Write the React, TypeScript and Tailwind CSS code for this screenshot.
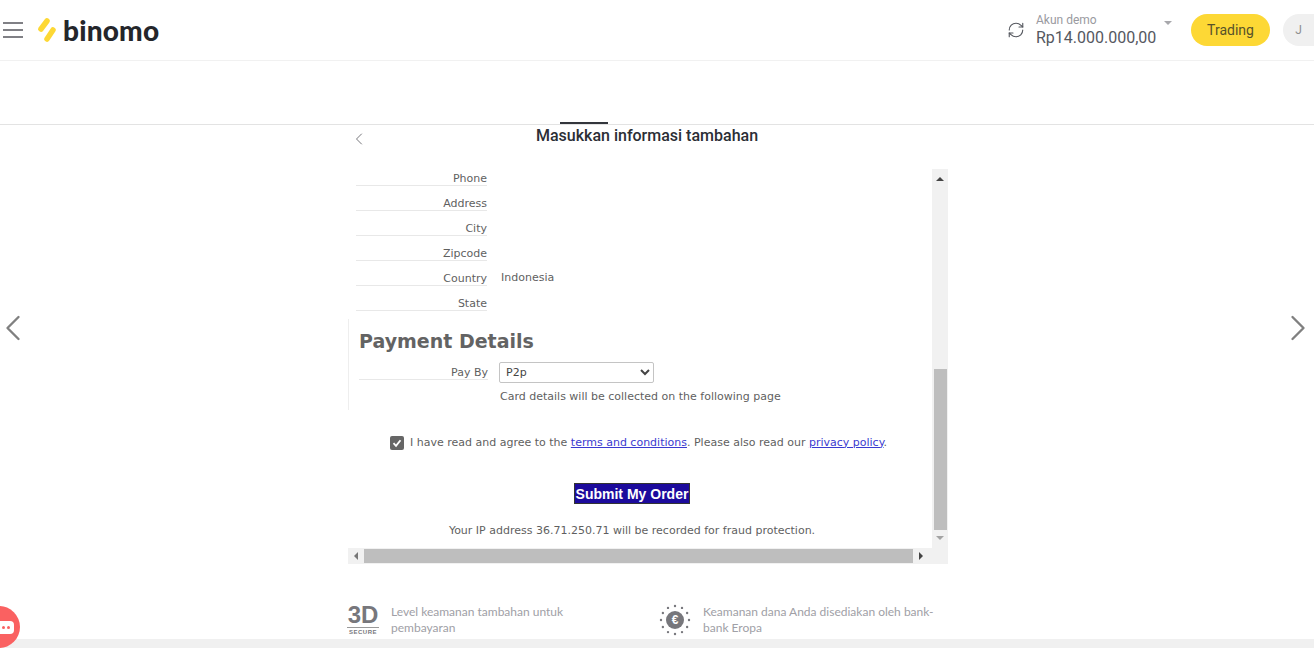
import { ChevronLeft, ChevronRight, RefreshCw } from "lucide-react";

const ROWS = [
  { label: "Phone", first: true },
  { label: "Address" },
  { label: "City" },
  { label: "Zipcode" },
  { label: "Country", value: "Indonesia" },
  { label: "State" },
];

function Logo() {
  return (
    <div className="ml-[15px] flex items-center">
      <svg width="18" height="24" viewBox="0 0 18 24">
        <path d="M9 3 L3 11" stroke="#fdd835" strokeWidth="5.5" strokeLinecap="round" />
        <path d="M15 12 L9 21" stroke="#fdd835" strokeWidth="5.5" strokeLinecap="round" />
      </svg>
      <span className="ml-[7px] font-['Lato',sans-serif] text-[28px] leading-none font-black tracking-[0.2px] text-[#24262b]">
        binomo
      </span>
    </div>
  );
}

function Header() {
  return (
    <header className="flex h-[61px] shrink-0 items-center border-b border-[#f1f1f1] pl-[3px]">
      <div className="flex w-5 flex-col gap-[5px]">
        <span className="h-0.5 bg-[#808085]" />
        <span className="h-0.5 bg-[#808085]" />
        <span className="h-0.5 bg-[#808085]" />
      </div>
      <Logo />
      <div className="ml-auto flex items-center">
        <RefreshCw size={18} strokeWidth={1.5} className="text-[#55585f]" />
        <div className="ml-[11px] w-[125px] font-['Roboto',sans-serif]">
          <div className="text-xs leading-[14px] text-[#9a9a9f]">Akun demo</div>
          <div className="mt-[1px] text-base leading-[20px] text-[#55585f]">Rp14.000.000,00</div>
        </div>
        <span className="mb-[14px] ml-[3px] border-x-[4px] border-t-[4px] border-x-transparent border-t-[#a8a8ac]" />
        <button className="ml-[19px] h-8 w-[79px] rounded-full bg-[#fdd835] font-['Roboto',sans-serif] text-sm text-[#57522a]">
          Trading
        </button>
        <span className="ml-[13px] flex h-8 w-[31px] items-center justify-center rounded-l-full bg-[#f0f0f0] font-['Roboto',sans-serif] text-xs text-[#8f8f8f]">
          J
        </span>
      </div>
    </header>
  );
}

function ScrollArrow({ dir }: { dir: "up" | "down" | "left" | "right" }) {
  const shape = {
    up: "border-x-[4px] border-b-[4px] border-x-transparent border-b-[#444]",
    down: "border-x-[4px] border-t-[4px] border-x-transparent border-t-[#a3a3a3]",
    left: "border-y-[4px] border-r-[4px] border-y-transparent border-r-[#777]",
    right: "border-y-[4px] border-l-[4px] border-y-transparent border-l-[#444]",
  }[dir];
  return (
    <span className="flex h-4 w-4 shrink-0 items-center justify-center">
      <span className={shape} />
    </span>
  );
}

function Form() {
  return (
    <div className="flex h-[379px] flex-1 flex-col overflow-hidden text-[11px] text-[#5f5f5f]">
      <div className="flex flex-col pl-2">
        {ROWS.map((row) => (
          <div key={row.label} className={`flex items-end ${row.first ? "h-[17px]" : "h-[25px]"}`}>
            <div className="w-[131px] border-b border-[#e8e8e8] pb-[-1px] text-right leading-[13px]">{row.label}</div>
            {row.value ? <div className="mb-[1px] ml-[14px] leading-[14px]">{row.value}</div> : null}
          </div>
        ))}
      </div>
      <div className="mt-2 flex h-[91px] flex-col border-l border-[#eeeeee] pl-[10px]">
        <h2 className="mt-[10px] text-[19px] leading-6 font-bold text-[#636363]">Payment Details</h2>
        <div className="mt-[9px] flex items-end">
          <div className="w-[129px] border-b border-[#e8e8e8] pr-[-2px] text-right leading-[13px]">Pay By</div>
          <select
            defaultValue="P2p"
            className="mb-[-3px] ml-[11px] h-[21px] w-[155px] rounded-[2px] border border-[#c4c4c4] bg-white pl-[2px] text-[11px] text-[#444]"
          >
            <option>P2p</option>
          </select>
        </div>
        <p className="mt-[10px] ml-[141px] leading-[14px]">Card details will be collected on the following page</p>
      </div>
      <div className="mt-[26px] ml-[42px] flex h-[14px] items-center">
        <span className="flex h-[14px] w-[14px] items-center justify-center rounded-[2px] bg-[#666]">
          <svg width="10" height="10" viewBox="0 0 10 10">
            <path d="M1.5 5.2 L4 7.8 L8.5 2.2" fill="none" stroke="#fff" strokeWidth="1.8" />
          </svg>
        </span>
        <p className="ml-[6px] whitespace-nowrap">
          I have read and agree to the{" "}
          <a className="text-[#3a3ad0] underline">terms and conditions</a>. Please also read our{" "}
          <a className="text-[#3a3ad0] underline">privacy policy</a>.
        </p>
      </div>
      <div className="mt-[33px] flex justify-center pr-[16px]">
        <button className="h-[21px] w-[116px] border border-[#333] bg-[#1c0a9c] font-['Liberation_Sans',sans-serif] text-sm leading-none font-bold text-white">
          Submit My Order
        </button>
      </div>
      <p className="mt-5 pr-[16px] text-center leading-[14px]">
        Your IP address 36.71.250.71 will be recorded for fraud protection.
      </p>
    </div>
  );
}

function Frame() {
  return (
    <div className="flex h-[395px] flex-col font-['DejaVu_Sans',sans-serif]">
      <div className="flex flex-1">
        <Form />
        <div className="flex w-4 flex-col items-center bg-[#f1f1f1] pt-[1px]">
          <span className="mt-[1px]">
            <ScrollArrow dir="up" />
          </span>
          <div className="h-[182px]" />
          <div className="h-[161px] w-[13px] bg-[#bebebe]" />
          <ScrollArrow dir="down" />
        </div>
      </div>
      <div className="flex h-4 items-center bg-[#f1f1f1]">
        <ScrollArrow dir="left" />
        <div className="h-[14px] w-[549px] bg-[#bebebe]" />
        <ScrollArrow dir="right" />
      </div>
    </div>
  );
}

function Footer() {
  return (
    <div className="mt-10 flex h-[35px] font-['Lato',sans-serif] text-xs leading-4 text-[#a0a0a6]">
      <div className="flex w-[312px] items-start">
        <div className="ml-[-1px] flex w-8 flex-col items-center font-['Liberation_Sans',sans-serif] text-[#77777c]">
          <span className="text-[24px] leading-[22px] font-bold">3D</span>
          <span className="mt-[1px] w-full border-t border-[#999] text-center text-[6px] leading-[9px] font-bold tracking-[0.5px]">
            SECURE
          </span>
        </div>
        <p className="ml-3 w-[190px]">Level keamanan tambahan untuk pembayaran</p>
      </div>
      <div className="flex items-start">
        <svg width="32" height="32" viewBox="0 0 32 32" className="shrink-0">
          <circle cx="16" cy="16" r="9" fill="#77777c" />
          <text x="16" y="20" textAnchor="middle" fontSize="12" fontWeight="700" fill="#fff" fontFamily="Liberation Sans">
            €
          </text>
          {[0, 1, 2, 3, 4, 5, 6, 7, 8, 9, 10, 11].map((i) => (
            <circle
              key={i}
              cx={16 + 14 * Math.cos((i * Math.PI) / 6)}
              cy={16 + 14 * Math.sin((i * Math.PI) / 6)}
              r="1.2"
              fill="#77777c"
            />
          ))}
        </svg>
        <p className="ml-3 w-[245px]">Keamanan dana Anda disediakan oleh bank-bank Eropa</p>
      </div>
    </div>
  );
}

export default function App() {
  return (
    <div className="relative flex h-[648px] w-full flex-col overflow-hidden bg-white">
      <Header />
      <div className="flex h-[64px] shrink-0 items-end border-b border-[#e3e3e3] pl-[560px]">
        <span className="h-0.5 w-12 bg-[#33363c]" />
      </div>

      <main className="ml-[348px] w-[600px] flex-1">
        <div className="relative flex h-[44px] justify-center pr-[2px] font-['Roboto',sans-serif] text-base leading-[22px] font-medium text-[#2b2e35]">
          Masukkan informasi tambahan
          <ChevronLeft size={20} strokeWidth={1.2} className="absolute top-[4px] left-[1px] text-[#77777c]" />
        </div>
        <Frame />
        <Footer />
      </main>
      <div className="h-[9px] shrink-0 bg-[#f0f0f0]" />

      <ChevronLeft size={44} strokeWidth={1.3} className="absolute top-[306px] left-[-9px] text-[#808080]" />
      <ChevronRight size={44} strokeWidth={1.3} className="absolute top-[306px] right-[-6px] text-[#808080]" />
      <div className="absolute top-[606px] left-[-22px] flex h-[42px] w-[42px] items-center justify-end rounded-full bg-[#fa6161] pr-[6px]">
        <span className="flex h-[13px] w-[20px] items-center justify-end gap-[2px] rounded-[4px] bg-white pr-[4px]">
          <span className="h-[3px] w-[3px] rounded-full bg-[#fa6161]" />
          <span className="h-[3px] w-[3px] rounded-full bg-[#fa6161]" />
        </span>
      </div>
    </div>
  );
}
